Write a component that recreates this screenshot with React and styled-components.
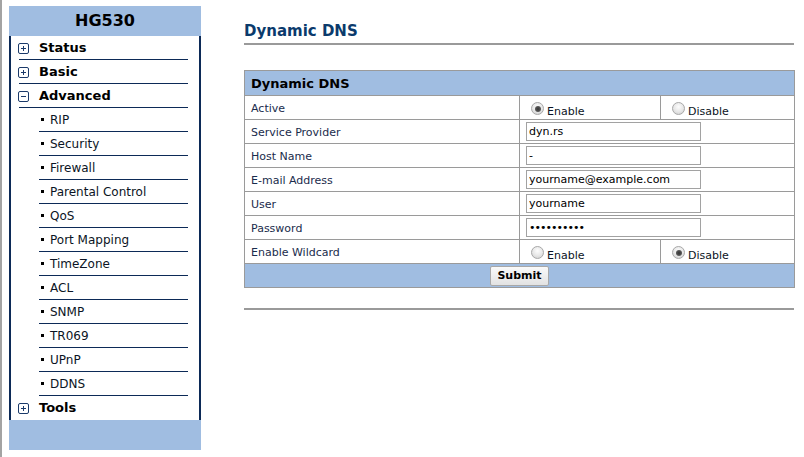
import React from 'react';
import styled, { createGlobalStyle } from 'styled-components';

const GlobalStyle = createGlobalStyle`
    html, body {
        margin: 0;
        padding: 0;
        background: #fff;
    }
    body {
        font-family: "DejaVu Sans", Verdana, sans-serif;
    }
`;

const Page = styled.div`
    display: flex;
    align-items: flex-start;
    min-height: 100vh;
    box-sizing: border-box;
    border-left: 2px solid #a3a3a3;
    padding-left: 7px;
`;

// 왼쪽 메뉴
const Sidebar = styled.div`
    width: 192px;
    margin-top: 6px;
    flex-shrink: 0;
`;

const SideHeader = styled.div`
    height: 30px;
    line-height: 30px;
    background: #a0bde1;
    text-align: center;
    font-size: 16px;
    font-weight: bold;
    color: #000;
`;

const MenuBox = styled.div`
    border-left: 2px solid #0c2a57;
    border-right: 2px solid #0c2a57;
    display: flex;
    flex-direction: column;
`;

const MenuItem = styled.div`
    display: flex;
    align-items: center;
    gap: 10px;
    height: 23px;
    margin: 0 11px 0 8px;
    border-bottom: ${props => (props.$last ? '1px solid transparent' : '1px solid #0c2a57')};
    font-size: 13px;
    font-weight: bold;
    color: #000;
`;

const ToggleBox = styled.span`
    position: relative;
    width: 9px;
    height: 9px;
    margin-left: -1px;
    margin-top: 1px;
    border: 1px solid #1b3a6a;
    border-radius: 2px;

    &::before {
        content: '';
        position: absolute;
        left: 2px;
        top: 4px;
        width: 5px;
        height: 1px;
        background: #1b3a6a;
    }
    &::after {
        content: '';
        display: ${props => (props.$open ? 'none' : 'block')};
        position: absolute;
        left: 4px;
        top: 2px;
        width: 1px;
        height: 5px;
        background: #1b3a6a;
    }
`;

const SubItem = styled.div`
    display: flex;
    align-items: center;
    gap: 6px;
    height: 23px;
    margin: 0 11px 0 28px;
    padding-left: 2px;
    border-bottom: 1px solid #0c2a57;
    font-size: 12px;
    color: #0b1424;
`;

const Bullet = styled.span`
    width: 3px;
    height: 3px;
    background: #000;
`;

const SideFooter = styled.div`
    height: 30px;
    background: #a0bde1;
`;

// 오른쪽 본문
const Content = styled.div`
    width: 550px;
    margin-left: 43px;
`;

const Title = styled.div`
    margin-top: 21px;
    height: 20px;
    line-height: 20px;
    padding-bottom: 2px;
    border-bottom: 2px solid #9a9a9a;
    font-size: 15px;
    font-weight: bold;
    color: #0b3a6c;
`;

const Table = styled.table`
    width: 550px;
    margin-top: 25px;
    border-collapse: collapse;
    border: 1px solid #9a9a9a;
    table-layout: fixed;
`;

const HeadCell = styled.th`
    height: 24px;
    padding: 0 6px;
    background: #a0bde1;
    border: 1px solid #9a9a9a;
    text-align: left;
    font-size: 13px;
    font-weight: bold;
    color: #000;
`;

const Cell = styled.td`
    height: 23px;
    padding: 0 6px;
    border: 1px solid #9a9a9a;
    font-size: 11px;
    color: #1a2c4c;
    white-space: nowrap;
`;

const LabelCell = styled(Cell)`
    padding-top: 2px;
    height: 21px;
`;

const RadioCell = styled(Cell)`
    padding: 0;
`;

const SubmitCell = styled.td`
    height: 23px;
    padding: 0;
    background: #a0bde1;
    border: 1px solid #9a9a9a;
    text-align: center;
`;

const TextInput = styled.input`
    box-sizing: border-box;
    width: 175px;
    height: 19px;
    margin: 0;
    padding: 0 2px;
    border: 1px solid #a2a2a2;
    font-family: "DejaVu Sans", Verdana, sans-serif;
    font-size: 11px;
    letter-spacing: ${props => (props.type === 'password' ? '-1px' : 'normal')};
    color: #000;
    display: block;
    outline: none;
`;

const RadioLabel = styled.label`
    display: flex;
    align-items: center;
    gap: 3px;
    padding: 8px 0 0 11px;
    font-size: 11px;
    color: #0b1424;
`;

const Radio = styled.span`
    position: relative;
    box-sizing: border-box;
    width: 13px;
    height: 13px;
    margin-top: -6px;
    border-radius: 50%;
    border: 1px solid #a9a9a9;
    background: radial-gradient(circle at 50% 35%, #fdfdfd 0%, #e6e6e6 55%, #cbcbcb 100%);

    &::after {
        content: '';
        display: ${props => (props.$checked ? 'block' : 'none')};
        position: absolute;
        left: 2.5px;
        top: 2.5px;
        width: 6px;
        height: 6px;
        border-radius: 50%;
        background: radial-gradient(circle, #333 0%, #555 60%, #808080 100%);
    }
`;

const SubmitButton = styled.button`
    height: 20px;
    padding: 0 6px;
    border: 1px solid #a8a8a8;
    border-radius: 2px;
    background: linear-gradient(#fafafa, #e2e2e2);
    font-family: "DejaVu Sans", Verdana, sans-serif;
    font-size: 11px;
    font-weight: bold;
    color: #000;
    vertical-align: middle;
`;

const Divider = styled.div`
    margin-top: 20px;
    height: 2px;
    background: #9a9a9a;
`;

const subMenu = ['RIP', 'Security', 'Firewall', 'Parental Control', 'QoS', 'Port Mapping', 'TimeZone', 'ACL', 'SNMP', 'TR069', 'UPnP', 'DDNS'];

const textRows = [
    { label: 'Service Provider', value: 'dyn.rs' },
    { label: 'Host Name', value: '-' },
    { label: 'E-mail Address', value: 'yourname@example.com' },
    { label: 'User', value: 'yourname' },
    { label: 'Password', value: 'abcdefghij', type: 'password' },
];

const RadioRow = ({ label, enabled }) => (
    <tr>
        <LabelCell>{label}</LabelCell>
        <RadioCell>
            <RadioLabel><Radio $checked={enabled} />Enable</RadioLabel>
        </RadioCell>
        <RadioCell>
            <RadioLabel><Radio $checked={!enabled} />Disable</RadioLabel>
        </RadioCell>
    </tr>
);

const App = () => {
    return (
        <>
            <GlobalStyle />
            <Page>
                <Sidebar>
                    <SideHeader>HG530</SideHeader>
                    <MenuBox>
                        <MenuItem><ToggleBox />Status</MenuItem>
                        <MenuItem><ToggleBox />Basic</MenuItem>
                        <MenuItem><ToggleBox $open />Advanced</MenuItem>
                        {subMenu.map(name => (
                            <SubItem key={name}><Bullet />{name}</SubItem>
                        ))}
                        <MenuItem $last><ToggleBox />Tools</MenuItem>
                    </MenuBox>
                    <SideFooter />
                </Sidebar>
                <Content>
                    <Title>Dynamic DNS</Title>
                    <Table>
                        <colgroup>
                            <col style={{ width: 275 }} />
                            <col style={{ width: 141 }} />
                            <col style={{ width: 134 }} />
                        </colgroup>
                        <tbody>
                            <tr><HeadCell colSpan={3}>Dynamic DNS</HeadCell></tr>
                            <RadioRow label="Active" enabled />
                            {textRows.map(row => (
                                <tr key={row.label}>
                                    <LabelCell>{row.label}</LabelCell>
                                    <Cell colSpan={2}>
                                        <TextInput type={row.type || 'text'} defaultValue={row.value} />
                                    </Cell>
                                </tr>
                            ))}
                            <RadioRow label="Enable Wildcard" enabled={false} />
                            <tr>
                                <SubmitCell colSpan={3}><SubmitButton>Submit</SubmitButton></SubmitCell>
                            </tr>
                        </tbody>
                    </Table>
                    <Divider />
                </Content>
            </Page>
        </>
    );
};

export default App;
